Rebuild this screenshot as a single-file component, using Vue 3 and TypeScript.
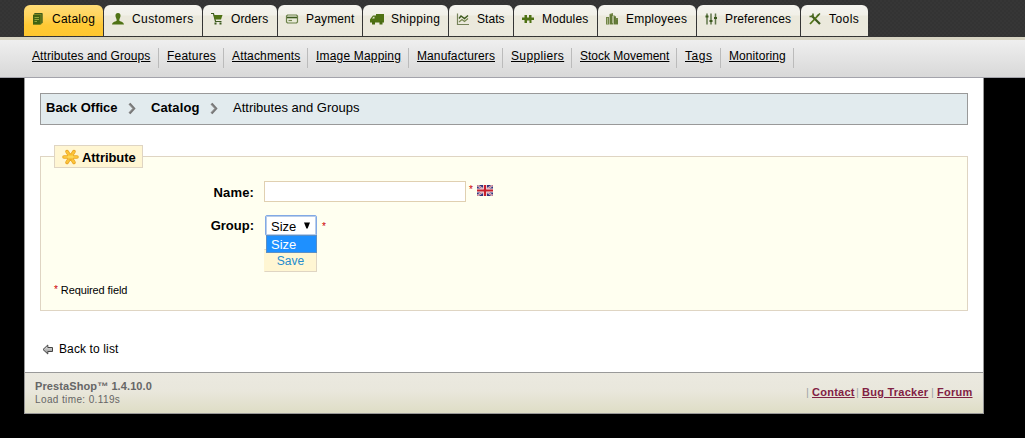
<template>
  <div class="back-office">
    <svg class="shared-defs" width="0" height="0">
      <linearGradient id="starFill" x1="0" y1="0" x2="0" y2="1">
        <stop offset="0" stop-color="#f8b51c" />
        <stop offset="0.5" stop-color="#ffdf62" />
        <stop offset="1" stop-color="#eda31b" />
      </linearGradient>
      <linearGradient id="arrowFill" x1="0" y1="0" x2="0" y2="1">
        <stop offset="0" stop-color="#eeeeee" />
        <stop offset="1" stop-color="#8a8a8a" />
      </linearGradient>
    </svg>

    <!-- main tabs -->
    <nav class="tabs">
      <a
        v-for="tab in tabs"
        :key="tab.name"
        class="tab"
        :class="{ active: tab.name === activeTab }"
        :style="{ width: tab.width + 'px', letterSpacing: tab.spacing + 'px' }"
        @click="activeTab = tab.name"
      >
        <svg class="tab-icon" width="14" height="14" viewBox="0 0 14 14">
          <path
            v-for="(shape, i) in tab.icon"
            :key="i"
            :d="shape.d"
            :fill="shape.fill || 'none'"
            :stroke="shape.stroke || 'none'"
            :stroke-width="shape.w || 1"
          />
        </svg>
        <span class="tab-text">{{ tab.name }}</span>
      </a>
    </nav>

    <!-- sub menu -->
    <ul class="submenu">
      <li
        v-for="item in subItems"
        :key="item.name"
        :style="{ width: item.width + 'px', letterSpacing: item.spacing + 'px' }"
      >
        <a>{{ item.name }}</a>
      </li>
    </ul>

    <div class="main">
      <div class="content">
        <div class="path-bar">
          <b class="crumb-home">Back Office</b>
          <svg class="chevron" width="9" height="13" viewBox="0 0 9 13">
            <path d="M1.5 1.5L6 6.5L1.5 11.5" fill="none" stroke="#777" stroke-width="2.4" />
            <path d="M1 2.5L4.8 6.5L1 10.5" fill="none" stroke="#aaa" stroke-width="0.8" />
          </svg>
          <b class="crumb-tab">Catalog</b>
          <svg class="chevron" width="9" height="13" viewBox="0 0 9 13">
            <path d="M1.5 1.5L6 6.5L1.5 11.5" fill="none" stroke="#777" stroke-width="2.4" />
            <path d="M1 2.5L4.8 6.5L1 10.5" fill="none" stroke="#aaa" stroke-width="0.8" />
          </svg>
          <span class="crumb-page">Attributes and Groups</span>
        </div>

        <form class="panel" @submit.prevent>
          <div class="legend">
            <svg width="17" height="16" viewBox="0 0 17 16">
              <path
                d="M2 8H15M5 2.6L12 13.4M12 2.6L5 13.4"
                stroke="#eaa626"
                stroke-width="3.6"
                stroke-linecap="round"
                fill="none"
              />
              <path
                d="M2.2 8H14.8M5.1 2.9L11.9 13.1M11.9 2.9L5.1 13.1"
                stroke="#fbc43a"
                stroke-width="2.2"
                stroke-linecap="round"
                fill="none"
              />
              <circle cx="8.5" cy="8" r="3" fill="url(#starFill)" />
            </svg>
            <span>Attribute</span>
          </div>

          <div class="row name-row">
            <label>Name:</label>
            <input v-model="name" type="text" />
            <sup>*</sup>
            <svg class="flag" width="16" height="11" viewBox="0 0 16 11">
              <path d="M0 0H16V11H0Z" fill="#35347b" />
              <path d="M0 0L16 11M16 0L0 11" stroke="#d8d4e4" stroke-width="2" />
              <path d="M0 0L16 11M16 0L0 11" stroke="#c9545c" stroke-width="0.8" />
              <path d="M8 0V11M0 5.5H16" stroke="#f0dfe4" stroke-width="4" />
              <path d="M8 0V11M0 5.5H16" stroke="#c8202c" stroke-width="2.2" />
            </svg>
          </div>

          <div class="row group-row">
            <label>Group:</label>
            <div class="select">
              <span>Size</span>
              <svg width="6" height="7" viewBox="0 0 6 7"><path d="M0 0.5H6L3.6 6.5H2.4Z" fill="#000" /></svg>
              <div class="options">Size</div>
            </div>
            <sup>*</sup>
          </div>

          <button class="save" type="submit">Save</button>

          <div class="required"><sup>*</sup><span>Required field</span></div>
        </form>

        <a class="back">
          <svg width="12" height="11" viewBox="0 0 12 11">
            <path d="M1 5.5L5.8 1V3.5H10.5V7.5H5.8V10Z" fill="url(#arrowFill)" stroke="#444" stroke-width="1" />
          </svg>
          <span>Back to list</span>
        </a>
      </div>

      <footer class="footer">
        <div class="version">
          <b>PrestaShop™ 1.4.10.0</b>
          <span>Load time: 0.119s</span>
        </div>
        <div class="links">
          <template v-for="link in footerLinks" :key="link.name">
            <i>|</i><a :style="{ width: link.width + 'px' }">{{ link.name }}</a>
          </template>
        </div>
      </footer>
    </div>
  </div>
</template>

<script lang="ts" setup>
import { ref } from 'vue';

interface Shape {
  d: string;
  fill?: string;
  stroke?: string;
  w?: number;
}

interface Tab {
  name: string;
  width: number;
  spacing: number;
  icon: Shape[];
}

const green = '#4f7214';
const dark = '#3c5a1e';

const activeTab = ref('Catalog');
const name = ref('');

const tabs: Tab[] = [
  {
    name: 'Catalog',
    width: 79,
    spacing: 0.25,
    icon: [
      { d: 'M4 1H11.5V11L10 12.5H2V3Z', fill: '#7a8420' },
      { d: 'M2 3H9.5V12.5H2Z', fill: '#3f6212' },
      { d: 'M3.5 5.5H8M3.5 7.5H8M3.5 9.5H6', stroke: '#91a43c' },
      { d: 'M3.5 1.5H11V11', stroke: dark },
    ],
  },
  {
    name: 'Customers',
    width: 98,
    spacing: 0.4,
    icon: [{ d: 'M7 1C9 1 9.8 2.4 9.5 4.2C9.3 5.8 8.3 6.5 8.3 8.5C9 9.8 12.5 9.3 13 12.5H1C1.5 9.3 5 9.8 5.7 8.5C5.7 6.5 4.7 5.8 4.5 4.2C4.2 2.4 5 1 7 1Z', fill: green }],
  },
  {
    name: 'Orders',
    width: 74,
    spacing: 0.1,
    icon: [
      { d: 'M1 1.5H3.5L5.5 9.5H11.5', stroke: dark, w: 1.2 },
      { d: 'M3.5 3H12.5L11 7.5H5Z', fill: green },
      { d: 'M4.5 10.5H6.5V12.5H4.5ZM9.5 10.5H11.5V12.5H9.5Z', fill: dark },
    ],
  },
  {
    name: 'Payment',
    width: 84,
    spacing: 0.15,
    icon: [
      { d: 'M2.5 3H11.5L12.5 4V10L11.5 11H2.5L1.5 10V4Z', stroke: '#6b8048', w: 1.2, fill: '#e8ead7' },
      { d: 'M2 5.5H12', stroke: dark, w: 1.6 },
      { d: 'M3.5 8.5H7', stroke: '#75874f', w: 1.2 },
    ],
  },
  {
    name: 'Shipping',
    width: 85,
    spacing: 0.3,
    icon: [
      { d: 'M6 2H14V10.5H6ZM1 6L3 3.5H6V10.5H0V7.5Z', fill: green },
      { d: 'M2 9H5V12.5H2ZM9.5 9H12.5V12.5H9.5Z', fill: '#4a6b12' },
      { d: 'M2 6.5L3.5 4.8H4.5V6.5Z', fill: '#e5e7cf' },
    ],
  },
  {
    name: 'Stats',
    width: 64,
    spacing: 0.05,
    icon: [
      { d: 'M1.5 1.5V12.5H13', stroke: '#758259', w: 1.2 },
      { d: 'M3 6.5L5 4L8.5 6.5L12 3.5', stroke: dark, w: 1.4 },
      { d: 'M3 10L6 7.5L8.5 9.5L12 6.5', stroke: '#75864e', w: 1.2 },
    ],
  },
  {
    name: 'Modules',
    width: 83,
    spacing: 0.15,
    icon: [{ d: 'M3.5 3H6V5.5H8V3H10.5V5.5H13V8H10.5V11H8.5V8.5H6V11H3.5V8H1V5.5H3.5Z', fill: green }],
  },
  {
    name: 'Employees',
    width: 98,
    spacing: 0.2,
    icon: [
      { d: 'M1 5H4V12.5H1ZM4.5 2L8 1V12.5H4.5ZM8.5 3L11 4.5V12.5H8.5ZM11 6H13V12.5H11Z', fill: '#718545' },
      { d: 'M6 3V12M9.8 5V12M12 8V12', stroke: '#4b6825', w: 0.8 },
      { d: 'M2.5 6V12M7.5 4V11', stroke: '#c3caa8', w: 0.7 },
    ],
  },
  {
    name: 'Preferences',
    width: 103,
    spacing: 0.13,
    icon: [
      { d: 'M3 1.5V12.5M7 1.5V12.5M11.5 1.5V12.5', stroke: '#60764a', w: 1.5 },
      { d: 'M1.5 3.5H4.5V5.5H1.5ZM5.5 8H8.5V10H5.5ZM10 5H13V7H10Z', fill: dark },
    ],
  },
  {
    name: 'Tools',
    width: 67,
    spacing: 0.45,
    icon: [
      { d: 'M3.5 3.5L12 12', stroke: dark, w: 2.2 },
      { d: 'M11 2.5L2 12', stroke: green, w: 1.8 },
      { d: 'M1.5 4.5H5V1.5M9 4L12 1.5', stroke: '#4d6922', w: 1.6 },
    ],
  },
];

const subItems = [
  { name: 'Attributes and Groups', width: 135, spacing: 0.08 },
  { name: 'Features', width: 65, spacing: 0.2 },
  { name: 'Attachments', width: 84, spacing: 0.15 },
  { name: 'Image Mapping', width: 101, spacing: 0.18 },
  { name: 'Manufacturers', width: 94, spacing: 0.1 },
  { name: 'Suppliers', width: 69, spacing: 0.35 },
  { name: 'Stock Movement', width: 105, spacing: 0 },
  { name: 'Tags', width: 44, spacing: 0.55 },
  { name: 'Monitoring', width: 73, spacing: 0.08 },
];

const footerLinks = [
  { name: 'Contact', width: 42 },
  { name: 'Bug Tracker', width: 67 },
  { name: 'Forum', width: 36 },
];
</script>

<style>
body {
  background: #000;
}
</style>

<style scoped>
.back-office {
  width: 1025px;
  height: 438px;
  overflow: hidden;
  font-family: 'Liberation Sans', Arial, sans-serif;
  font-size: 12px;
  color: #000;
  background: #000;
}

.back-office * {
  box-sizing: border-box;
}

.shared-defs {
  display: block;
}

.tabs {
  display: flex;
  gap: 1px;
  height: 40px;
  padding: 5px 0 0 24px;
  border-bottom: 3px solid #d7d4c3;
  background: repeating-conic-gradient(#333 0 25%, #363636 0 50%) 0 0 / 4px 4px;
}

.tab {
  display: flex;
  flex: none;
  height: 31px;
  padding: 7px 0 0 7px;
  border-radius: 6px 6px 0 0;
  background: linear-gradient(#f5f4ef 0, #f1f0e8 10px, #ebe9dc 11px, #ebe9dd 31px);
  cursor: pointer;
}

.tab.active {
  background: linear-gradient(#ffdc77 0, #ffd560 10px, #ffc935 20px, #ffc72d 31px);
}

.tab-icon {
  flex: none;
  margin-right: 7px;
}

.tab-text {
  line-height: 14px;
  white-space: nowrap;
}

.submenu {
  display: flex;
  height: 38px;
  margin: 0;
  padding: 8px 0 0 24px;
  list-style: none;
  border-bottom: 1px solid #a3a3ab;
  background: linear-gradient(#efefef, #d8d8d8);
}

.submenu li {
  flex: none;
  height: 20px;
  padding-left: 8px;
  border-right: 1px solid #bbb;
  line-height: 16px;
  white-space: nowrap;
}

.submenu a {
  text-decoration: underline;
}

.main {
  width: 960px;
  height: 336px;
  margin-left: 24px;
  border: 1px solid #999;
  border-top: 0;
  background: #fff;
}

.content {
  height: 294px;
  padding: 15px 15px 0;
}

.path-bar {
  display: flex;
  align-items: flex-start;
  height: 32px;
  padding: 6px 0 0 5px;
  border: 1px solid #999;
  background: #e2ebee;
  font-size: 13px;
  line-height: 15px;
}

.crumb-home {
  width: 82px;
}

.crumb-tab {
  width: 59px;
  margin-left: 14px;
  letter-spacing: 0.12px;
}

.crumb-page {
  margin-left: 14px;
}

.chevron {
  margin-top: 2px;
}

.panel {
  position: relative;
  height: 155px;
  margin-top: 31px;
  padding: 24px 0 0 13px;
  border: 1px solid #dfd5c3;
  background: #fffff0;
}

.legend {
  position: absolute;
  top: -12px;
  left: 13px;
  display: flex;
  align-items: center;
  width: 89px;
  height: 23px;
  padding: 1px 0 0 7px;
  gap: 3px;
  border: 1px solid #dfd5c3;
  background: #fff6d3;
  font-size: 13px;
  font-weight: bold;
  letter-spacing: -0.05px;
}

.row {
  display: flex;
  align-items: flex-start;
}

.row label {
  width: 200px;
  padding-top: 3px;
  text-align: right;
  font-size: 13px;
  line-height: 16px;
  font-weight: bold;
}

.name-row label {
  padding-top: 4px;
  letter-spacing: 0.15px;
}

.row input {
  width: 202px;
  height: 21px;
  margin-left: 10px;
  padding: 0 4px;
  border: 1px solid #e0d0b1;
  outline: none;
  background: #fff;
}

sup {
  color: #c00;
  font-size: 10px;
  line-height: 12px;
  vertical-align: top;
}

.row sup {
  margin: 3px 0 0 3px;
}

.flag {
  margin: 4px 0 0 4px;
}

.group-row {
  height: 20px;
  margin-top: 13px;
}

.select {
  position: relative;
  display: flex;
  align-items: center;
  width: 52px;
  height: 21px;
  margin-left: 11px;
  padding: 1px 0 0 5px;
  border: 1px solid #82a9e5;
  border-radius: 2px;
  box-shadow: inset 0 0 0 1px #b8cdea;
  background: #fff;
  font-size: 13px;
}

.select svg {
  margin: -1px 0 0 8px;
}

.options {
  position: absolute;
  z-index: 2;
  top: 19px;
  left: 0;
  width: 51px;
  height: 18px;
  padding-left: 4px;
  border: 1px solid #5b8fc5;
  background: #1e90ff;
  color: #fff;
  line-height: 17px;
}

.group-row sup {
  margin: 6px 0 0 5px;
}

.save {
  display: block;
  width: 53px;
  height: 23px;
  margin: 14px 0 0 210px;
  padding: 0;
  border: 1px solid #dfd5c3;
  border-left-color: #fff6d3;
  background: #fff6d3;
  color: #268ccd;
  font: 12px 'Liberation Sans', Arial, sans-serif;
}

.required {
  display: flex;
  gap: 3px;
  margin-top: 12px;
  font-size: 11px;
  line-height: 13px;
  letter-spacing: -0.1px;
}

.back {
  display: flex;
  align-items: center;
  gap: 5px;
  margin: 30px 0 0 2px;
  line-height: 16px;
  letter-spacing: 0.12px;
}

.footer {
  display: flex;
  justify-content: space-between;
  height: 41px;
  padding: 6px 10px 0;
  border-top: 1px solid #999;
  background: linear-gradient(#ebe9e0 0, #e9e7dc 18px, #deddc5 40px);
  color: #666;
  font-size: 11px;
}

.version {
  display: flex;
  flex-direction: column;
  line-height: 14px;
  letter-spacing: 0.1px;
}

.version span {
  font-size: 10px;
  line-height: 13px;
  letter-spacing: 0.38px;
}

.links {
  display: flex;
  padding-top: 6px;
  line-height: 14px;
}

.links i {
  width: 6px;
  color: #a0a5a5;
  font-style: normal;
}

.links a {
  margin-right: 2px;
  color: #812143;
  font-weight: bold;
  letter-spacing: 0.25px;
  text-decoration: underline;
  white-space: nowrap;
}

.links a:last-child {
  margin-right: 0;
}
</style>
